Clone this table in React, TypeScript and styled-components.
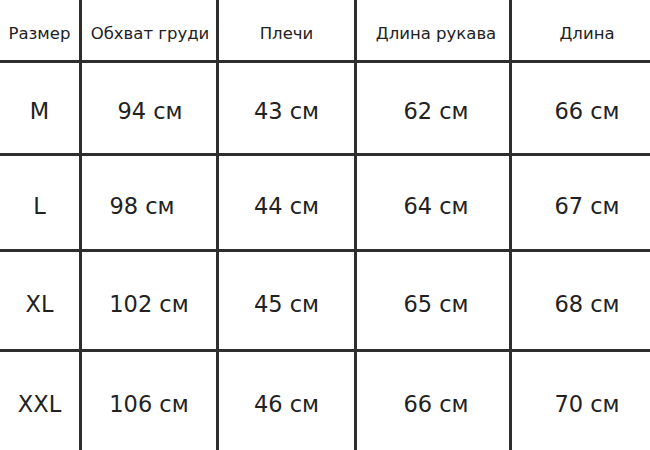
import React from "react";
import styled, {createGlobalStyle} from "styled-components";

const GlobalStyle = createGlobalStyle`
    html, body {
        margin: 0;
        padding: 0;
        background: #ffffff;
    }
`;

const Table = styled.div`
    width: 650px;
    height: 450px;
    display: grid;
    grid-template-columns: 79px 134px 135px 152px 138px;
    grid-template-rows: 60px 90px 93px 97px 98px;
    gap: 3px;
    background-color: #2e2e2e;
    font-family: "DejaVu Sans", sans-serif;
    color: #222222;
`;

const HeadCell = styled.div<{ $shift?: number }>`
    background-color: #ffffff;
    display: flex;
    align-items: center;
    justify-content: center;
    padding-top: 6px;
    padding-left: ${props => props.$shift && props.$shift > 0 ? props.$shift * 2 : 0}px;
    font-size: 16.5px;
    white-space: nowrap;
`;

const Cell = styled.div<{ $shift?: number }>`
    background-color: #ffffff;
    display: flex;
    align-items: center;
    justify-content: center;
    padding-top: 6px;
    padding-left: ${props => props.$shift && props.$shift > 0 ? props.$shift * 2 : 0}px;
    padding-right: ${props => props.$shift && props.$shift < 0 ? -props.$shift * 2 : 0}px;
    font-size: 22.5px;
    white-space: nowrap;
`;

const headers = ['Размер', 'Обхват груди', 'Плечи', 'Длина рукава', 'Длина'];
const headerShifts = [0, 1, 0, 3, 6];

const rows: string[][] = [
    ['M', '94 см', '43 см', '62 см', '66 см'],
    ['L', '98 см', '44 см', '64 см', '67 см'],
    ['XL', '102 см', '45 см', '65 см', '68 см'],
    ['XXL', '106 см', '46 см', '66 см', '70 см'],
];

// small horizontal offsets seen in the original chart
const shifts: number[][] = [
    [0, 1, 0, 3, 6],
    [0, -7, 0, 3, 6],
    [0, 0, 0, 3, 6],
    [0, 0, 0, 3, 6],
];

export default function App(): React.ReactElement {
    return <>
        <GlobalStyle/>
        <Table>
            {headers.map((h, i) => <HeadCell key={h} $shift={headerShifts[i]}>{h}</HeadCell>)}
            {rows.map((row, r) => row.map((value, c) =>
                <Cell key={r + '-' + c} $shift={shifts[r][c]}>{value}</Cell>
            ))}
        </Table>
    </>;
}
